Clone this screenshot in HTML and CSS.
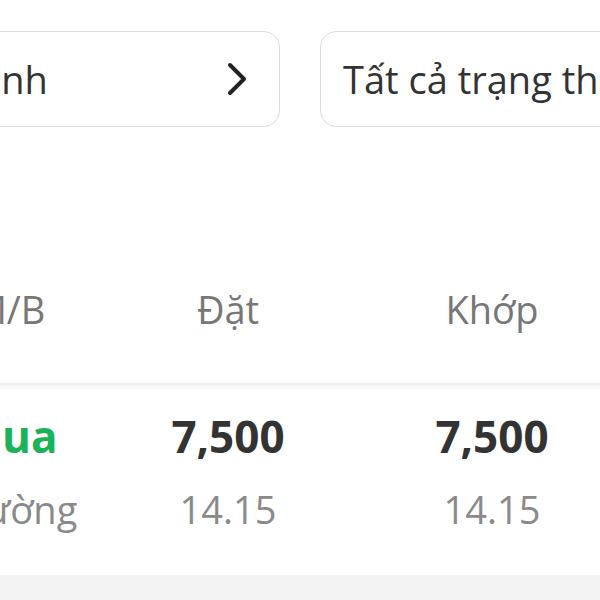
FILE: index.html
```html
<!DOCTYPE html>
<html lang="vi">
<head>
  <meta charset="UTF-8">
  <title>Sổ lệnh</title>
  <link rel="stylesheet" href="styles.css">
</head>
<body>

<div class="screen">
  <div class="filters">
    <div class="filter">
      <span class="filter-text">Loại lệnh</span>
      <svg class="chevron" width="22" height="34" viewBox="0 0 22 34">
        <path d="M4 3 L18 17 L4 31" fill="none" stroke="#222" stroke-width="4" stroke-linecap="round" stroke-linejoin="round"/>
      </svg>
    </div>
    <div class="filter">
      <span class="filter-text">Tất cả trạng thái</span>
    </div>
  </div>

  <div class="orders">
    <div class="head">
      <div class="cell">M/B</div>
      <div class="cell">Đặt</div>
      <div class="cell">Khớp</div>
      <div class="cell">Trạng thái</div>
    </div>

    <div class="row">
      <div class="cell">
        <div class="main buy">Mua</div>
        <div class="sub">Thường</div>
      </div>
      <div class="cell">
        <div class="main">7,500</div>
        <div class="sub">14.15</div>
      </div>
      <div class="cell">
        <div class="main">7,500</div>
        <div class="sub">14.15</div>
      </div>
      <div class="cell">
        <div class="main">Khớp</div>
        <div class="sub">10:15</div>
      </div>
    </div>
  </div>

  <div class="gap-bar"></div>
</div>

</body>
</html>
```

FILE: styles.css
```css
body {
  margin: 0;
  background: #fff;
  font-family: 'Open Sans', sans-serif;
  color: #333;
  overflow: hidden;
}
.screen {
  width: 872px;
  margin-left: -136px;
}
.filters {
  display: flex;
  gap: 40px;
  padding-top: 31px;
}
.filter {
  flex: 1;
  height: 96px;
  box-sizing: border-box;
  border: 1.5px solid #dcdcdc;
  border-radius: 16px;
  display: flex;
  align-items: center;
  justify-content: space-between;
  padding: 0 31px 0 22px;
  white-space: nowrap;
  overflow: hidden;
}
.filter-text {
  font-size: 38px;
  color: #333;
}
.chevron {
  flex-shrink: 0;
}
.orders {
  margin-top: 156px;
}
.head, .row {
  display: grid;
  grid-template-columns: 174px 264px 264px 1fr;
  padding-left: 58px;
  text-align: center;
  white-space: nowrap;
}
.head {
  font-size: 38px;
  color: #777;
  height: 100px;
}
.row {
  border-top: 2px solid #eeeeee;
  box-shadow: inset 0 6px 4px -4px #f4f4f4;
  padding-top: 19px;
  height: 192px;
  box-sizing: border-box;
}
.main {
  font-size: 44px;
  font-weight: 700;
  color: #333;
  line-height: 64px;
}
.main.buy {
  color: #1bb35a;
}
.sub {
  font-size: 38px;
  color: #8a8a8a;
  line-height: 82px;
}
.gap-bar {
  height: 40px;
  background: #f3f3f3;
}
```
